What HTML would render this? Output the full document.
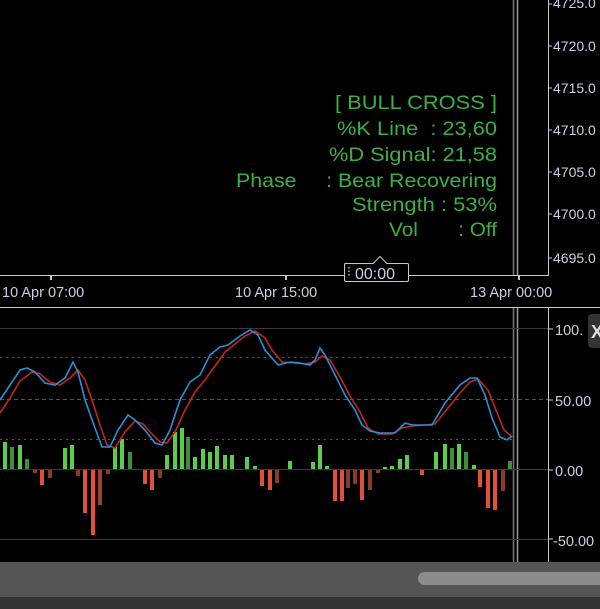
<!DOCTYPE html>
<html><head><meta charset="utf-8"><style>
html,body{margin:0;padding:0;background:#000;width:600px;height:609px;overflow:hidden}
svg{display:block}
text{font-family:"Liberation Sans",sans-serif}
</style></head><body>
<svg width="600" height="609" viewBox="0 0 600 609" xmlns="http://www.w3.org/2000/svg">
<rect width="600" height="609" fill="#000"/>
<line x1="548.5" y1="0" x2="548.5" y2="275" stroke="#c8c8c8" stroke-width="1"/>
<line x1="0" y1="275.5" x2="549" y2="275.5" stroke="#c8c8c8" stroke-width="1"/>
<line x1="513.5" y1="0" x2="513.5" y2="275" stroke="#777" stroke-width="1.5"/>
<line x1="517.5" y1="0" x2="517.5" y2="275" stroke="#999" stroke-width="1.5"/>
<g fill="#c6d2de" font-size="14">
<text x="553" y="8">4725.0</text>
<text x="553" y="51">4720.0</text>
<text x="553" y="93">4715.0</text>
<text x="553" y="135">4710.0</text>
<text x="553" y="177">4705.0</text>
<text x="553" y="219">4700.0</text>
<text x="553" y="263">4695.0</text>
</g>
<g stroke="#c8c8c8"><line x1="548" y1="4" x2="552" y2="4"/><line x1="548" y1="46" x2="552" y2="46"/><line x1="548" y1="88" x2="552" y2="88"/><line x1="548" y1="130" x2="552" y2="130"/><line x1="548" y1="172" x2="552" y2="172"/><line x1="548" y1="214" x2="552" y2="214"/><line x1="548" y1="258" x2="552" y2="258"/>
<line x1="51" y1="275" x2="51" y2="280" stroke-width="2"/><line x1="286" y1="275" x2="286" y2="280" stroke-width="2"/><line x1="519" y1="275" x2="519" y2="280" stroke-width="2"/></g>
<g fill="#3db043" font-size="19.5" lengthAdjust="spacingAndGlyphs">
<text x="335" y="109" textLength="162" lengthAdjust="spacingAndGlyphs">[ BULL CROSS ]</text>
<text x="337" y="135" textLength="160" lengthAdjust="spacingAndGlyphs" xml:space="preserve">%K Line  : 23,60</text>
<text x="329" y="161" textLength="168" lengthAdjust="spacingAndGlyphs">%D Signal: 21,58</text>
<text x="236" y="187" textLength="261" lengthAdjust="spacingAndGlyphs" xml:space="preserve">Phase     : Bear Recovering</text>
<text x="352" y="211" textLength="145" lengthAdjust="spacingAndGlyphs">Strength : 53%</text>
<text x="389" y="236" textLength="108" lengthAdjust="spacingAndGlyphs" xml:space="preserve">Vol       : Off</text>
</g>
<path d="M344.5 263.5 H373 L380 256.5 L387 263.5 H407.5 Q408.5 263.5 408.5 265 V280 Q408.5 281.5 407 281.5 H346 Q344.5 281.5 344.5 280 V265 Q344.5 263.5 346 263.5Z" fill="#000" stroke="#c8c8c8"/>
<g fill="#888"><rect x="348" y="267" width="2" height="1.5"/><rect x="348" y="270.5" width="2" height="1.5"/><rect x="348" y="274" width="2" height="1.5"/></g>
<text x="355" y="279" fill="#c6d2de" font-size="16">00:00</text>
<g fill="#c6d2de" font-size="14.5"><text x="2" y="297">10 Apr 07:00</text><text x="235" y="297">10 Apr 15:00</text><text x="470" y="297">13 Apr 00:00</text></g>
<line x1="0" y1="307.5" x2="600" y2="307.5" stroke="#c8c8c8"/>
<line x1="548.5" y1="308" x2="548.5" y2="562" stroke="#c8c8c8"/>
<line x1="513.5" y1="308" x2="513.5" y2="562" stroke="#777" stroke-width="1.5"/>
<line x1="517.5" y1="308" x2="517.5" y2="562" stroke="#999" stroke-width="1.5"/>
<g stroke="#3a3a3a"><line x1="0" y1="328.5" x2="548" y2="328.5"/><line x1="0" y1="469.5" x2="548" y2="469.5"/><line x1="0" y1="539.5" x2="548" y2="539.5"/></g>
<g stroke="#555" stroke-dasharray="2,4"><line x1="0" y1="357.5" x2="512" y2="357.5"/><line x1="0" y1="439.5" x2="512" y2="439.5"/></g>
<line x1="0" y1="399.5" x2="548" y2="399.5" stroke="#555" stroke-dasharray="4,3"/>
<g fill="#c6d2de" font-size="14.5"><text x="555" y="335">100.</text><text x="555" y="406">50.00</text><text x="555" y="476">0.00</text><text x="553" y="546">-50.00</text></g>
<g stroke="#c8c8c8"><line x1="548" y1="329" x2="553" y2="329"/><line x1="548" y1="400" x2="553" y2="400"/><line x1="548" y1="470" x2="553" y2="470"/><line x1="548" y1="539" x2="553" y2="539"/></g>
<rect x="588" y="314" width="16" height="34" rx="4" fill="#333"/>
<text x="591" y="338" fill="#ddd" font-size="18" font-weight="bold">X</text>
<g fill="#5ccc4c">
<rect x="3" y="442" width="4" height="27"/><rect x="10" y="447" width="4" height="22" fill="#3f8f3a"/><rect x="18" y="445" width="4" height="24"/><rect x="25" y="459" width="4" height="10" fill="#3f8f3a"/>
<rect x="63" y="448" width="4" height="21"/><rect x="70" y="445" width="4" height="24"/><rect x="113" y="447" width="4" height="22"/><rect x="120" y="439" width="4" height="30"/><rect x="128" y="452" width="4" height="17" fill="#3f8f3a"/>
<rect x="165" y="455" width="4" height="14"/><rect x="173" y="432" width="4" height="37"/><rect x="180" y="428" width="4" height="41"/><rect x="186" y="437" width="4" height="32" fill="#3f8f3a"/><rect x="193" y="457" width="4" height="12"/><rect x="201" y="449" width="4" height="20"/><rect x="208" y="452" width="4" height="17"/><rect x="215" y="446" width="4" height="23"/><rect x="223" y="455" width="4" height="14"/><rect x="230" y="455" width="4" height="14"/><rect x="245" y="457" width="4" height="12"/><rect x="253" y="466" width="4" height="3"/><rect x="288" y="461" width="4" height="8"/>
<rect x="311" y="462" width="4" height="7"/><rect x="318" y="445" width="4" height="24"/><rect x="325" y="466" width="4" height="3"/><rect x="383" y="467" width="4" height="2"/><rect x="390" y="466" width="4" height="3"/><rect x="398" y="459" width="4" height="10"/><rect x="405" y="455" width="4" height="14"/><rect x="434" y="452" width="4" height="17"/><rect x="443" y="444" width="4" height="25"/><rect x="450" y="448" width="4" height="21" fill="#3f8f3a"/><rect x="457" y="444" width="4" height="25"/><rect x="464" y="452" width="4" height="17" fill="#3f8f3a"/><rect x="472" y="465" width="4" height="4"/><rect x="508" y="461" width="4" height="8" fill="#3f8f3a"/>
</g>
<g fill="#e0503a">
<rect x="33" y="470" width="4" height="3" fill="#8a3a2a"/><rect x="40" y="470" width="4" height="15"/><rect x="48" y="470" width="4" height="8" fill="#8a3a2a"/><rect x="76" y="470" width="4" height="6" fill="#8a3a2a"/><rect x="83" y="470" width="4" height="43"/><rect x="91" y="470" width="4" height="65"/><rect x="98" y="470" width="4" height="35" fill="#a0402e"/><rect x="106" y="470" width="4" height="4" fill="#8a3a2a"/>
<rect x="143" y="470" width="4" height="14"/><rect x="150" y="470" width="4" height="20"/><rect x="158" y="470" width="4" height="8" fill="#8a3a2a"/><rect x="260" y="470" width="4" height="16"/><rect x="268" y="470" width="4" height="20"/><rect x="275" y="470" width="4" height="13" fill="#8a3a2a"/>
<rect x="333" y="470" width="4" height="31"/><rect x="340" y="470" width="4" height="31"/><rect x="346" y="470" width="4" height="18" fill="#8a3a2a"/><rect x="353" y="470" width="4" height="14" fill="#8a3a2a"/><rect x="360" y="470" width="4" height="30"/><rect x="368" y="470" width="4" height="20" fill="#8a3a2a"/><rect x="376" y="470" width="4" height="3" fill="#8a3a2a"/><rect x="420" y="470" width="4" height="5"/><rect x="478" y="470" width="4" height="17"/><rect x="486" y="470" width="4" height="38"/><rect x="493" y="470" width="4" height="40"/><rect x="501" y="470" width="4" height="21" fill="#8a3a2a"/>
</g>
<polyline fill="none" stroke="#c0281e" stroke-width="1.6" points="0,413 10,398 20,381 32,372 40,374 50,382 60,385 70,378 78,370 85,380 92,400 100,425 107,445 115,448 125,432 135,421 143,424 153,435 160,442 167,443 175,432 185,410 195,392 205,380 215,366 225,352 235,344 245,336 255,331 265,338 272,350 282,362 295,363 305,364 315,362 322,356 330,360 340,377 350,396 360,412 368,428 378,434 392,434 402,428 412,426 425,425 435,424 448,408 460,393 470,382 478,379 488,390 496,410 504,430 512,437"/>
<polyline fill="none" stroke="#2a8fd8" stroke-width="1.6" points="0,400 10,385 20,370 27,368 35,372 45,383 55,385 65,378 73,362 78,372 85,400 95,428 102,447 110,447 118,430 128,415 135,420 145,430 155,443 162,445 170,430 180,400 190,382 200,375 210,355 220,347 228,345 240,336 250,330 258,335 265,350 278,365 290,362 300,363 310,365 315,360 320,348 325,355 335,375 345,395 355,410 362,425 370,431 380,433 395,433 405,423 412,425 425,425 432,425 445,403 460,385 470,378 477,378 485,395 492,418 500,437 507,440 512,436"/>
<rect x="0" y="562" width="600" height="35" fill="#555"/>
<rect x="418" y="572" width="190" height="13" rx="6.5" fill="#8c8c8c"/>
<rect x="0" y="597" width="600" height="12" fill="#333"/>
</svg>
</body></html>
